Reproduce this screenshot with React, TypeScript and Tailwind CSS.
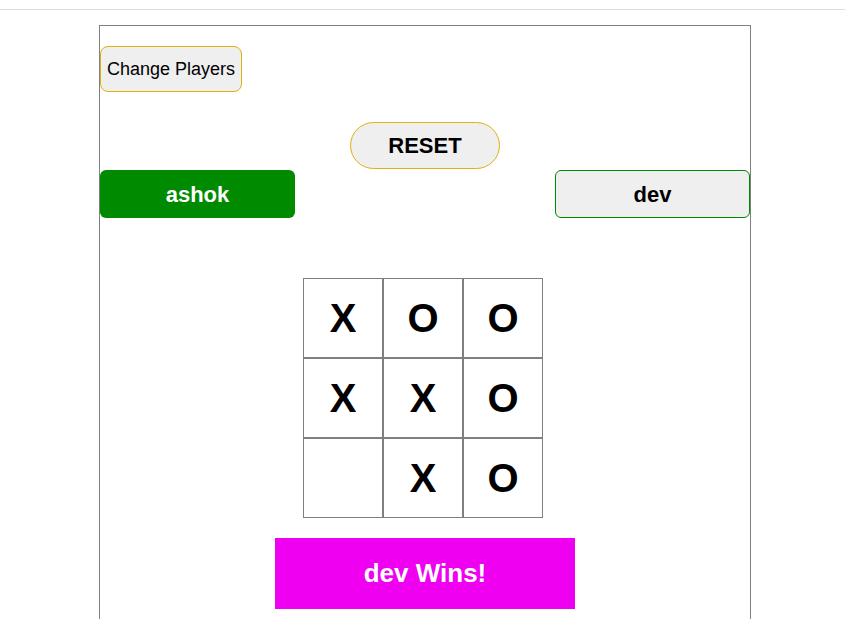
import React from "react";

const board = ["X", "O", "O", "X", "X", "O", "", "X", "O"];

export default function App() {
  return (
    <div className="min-h-[619px] bg-white text-black" style={{ fontFamily: '"Liberation Sans", Arial, sans-serif' }}>
      <div className="h-[9px]" />
      <div className="h-px bg-[#dcdcdc]" />
      <div className="h-[15px]" />
      <div className="ml-[99px] w-[652px] h-[600px] border border-[#808080] border-b-0">
        <div className="mt-[20px]">
          <button className="w-[142px] h-[46px] bg-[#efefef] border border-[#e0b010] rounded-[8px] text-[18px] leading-none">
            Change Players
          </button>
        </div>
        <div className="mt-[30px] flex justify-center">
          <button className="w-[150px] h-[47px] bg-[#efefef] border border-[#e0b010] rounded-full text-[22px] font-bold">
            RESET
          </button>
        </div>
        <div className="mt-px flex justify-between">
          <button className="w-[195px] h-[48px] bg-[#008a00] text-white rounded-[6px] text-[22px] font-bold">
            ashok
          </button>
          <button className="w-[195px] h-[48px] bg-[#efefef] border border-[#008a00] rounded-[6px] text-[22px] font-bold">
            dev
          </button>
        </div>
        <div className="mt-[60px] flex justify-center">
          <div className="grid grid-cols-3 w-[240px] -translate-x-[2px]">
            {board.map((v, i) => (
              <div
                key={i}
                className="w-[80px] h-[80px] border border-[#808080] flex items-center justify-center text-[40px] font-bold"
              >
                {v}
              </div>
            ))}
          </div>
        </div>
        <div className="mt-[20px] flex justify-center">
          <div className="w-[300px] h-[71px] bg-[#f000f0] text-white flex items-center justify-center text-[26px] font-bold">
            dev Wins!
          </div>
        </div>
      </div>
    </div>
  );
}
